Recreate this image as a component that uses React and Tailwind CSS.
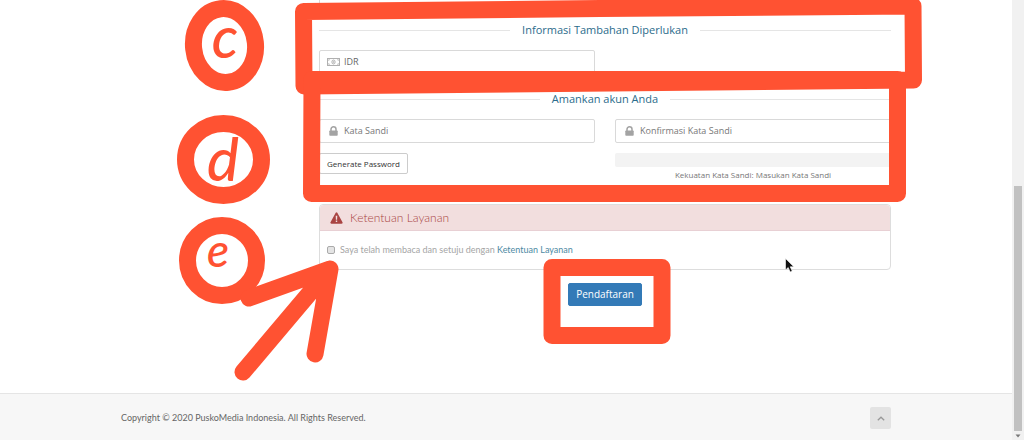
import React, { useState } from "react";

function SectionTitle({ children }) {
  return (
    <div className="flex items-center gap-3">
      <span className="h-px flex-1 bg-[#e5e5e5]" />
      <h2 className="text-[11px] leading-[18px] text-[#2b6c8c]">{children}</h2>
      <span className="h-px flex-1 bg-[#e5e5e5]" />
    </div>
  );
}

function MoneyIcon() {
  return (
    <svg viewBox="0 0 13 8" className="h-2 w-[13px]" fill="none" stroke="#b0b0b0">
      <rect x="0.5" y="0.5" width="12" height="7" />
      <ellipse cx="6.5" cy="4" rx="1.6" ry="2" />
      <path d="M6.5 2.8v2.4M1 2.2h1.2V1M12 2.2h-1.2V1M1 5.8h1.2V7M12 5.8h-1.2V7" strokeWidth="0.7" />
    </svg>
  );
}

function LockIcon() {
  return (
    <svg viewBox="0 0 9 10" className="h-[10px] w-[9px]">
      <path d="M2 5V3.3a2.5 2.5 0 0 1 5 0V5" fill="none" stroke="#a3a3a3" strokeWidth="1.5" />
      <rect x="0.3" y="4.5" width="8.4" height="5.3" rx="0.7" fill="#a3a3a3" />
    </svg>
  );
}

function WarningIcon() {
  return (
    <svg viewBox="0 0 13 12" className="h-3 w-[13px]">
      <path
        d="M5.7.8a.95.95 0 0 1 1.6 0l5.2 9.5c.4.7-.1 1.4-.9 1.4H1.4c-.8 0-1.3-.7-.9-1.4z"
        fill="#a94442"
      />
      <path d="M5.7 3.8h1.6l-.2 4H5.9zM5.8 8.5h1.4v1.4H5.8z" fill="#f2dede" />
    </svg>
  );
}

function PasswordField({ id, label, value, onChange }) {
  return (
    <div className="flex h-6 items-center gap-[6px] rounded-xs border border-[#d9d9d9] bg-white pl-[9px]">
      <label htmlFor={id} aria-label={label}>
        <LockIcon />
      </label>
      <input
        id={id}
        type="password"
        placeholder={label}
        value={value}
        onChange={onChange}
        className="min-w-0 flex-1 text-[9px] text-[#777] outline-none placeholder:text-[#777]"
      />
    </div>
  );
}

// Hand-drawn marks that lie over the form
function Annotations() {
  return (
    <svg
      className="pointer-events-none absolute top-0 left-0"
      width="1024"
      height="440"
      viewBox="0 0 1024 440"
    >
      <g fill="none" stroke="#ff5232" strokeWidth="17" strokeLinecap="round" strokeLinejoin="round">
        <ellipse cx="224.5" cy="45.5" rx="31" ry="37" transform="rotate(-6 224.5 45.5)" />
        <ellipse cx="223.5" cy="159.5" rx="38" ry="36" />
        <ellipse cx="222" cy="260.5" rx="34.5" ry="35" />
        <path d="M303.5 11.5L600 8.5L913 6L913.5 80L304 86Z" />
        <path d="M312 79.5H897.5V193.5H311.5Z" />
        <path d="M552 267.5H662V335.5H552Z" />
        <path d="M249 298L330 269L315 354M243 372L330 269" />
      </g>
      <g fill="#ff5232" textAnchor="middle" className="font-['Lato',sans-serif] font-medium">
        <text x="225" y="58" fontSize="58" fontStyle="italic">c</text>
        <text x="223" y="181" fontSize="60" fontStyle="italic">d</text>
        <text x="218" y="267" fontSize="46" fontStyle="italic">e</text>
      </g>
      <path
        d="M785.5 258.5v11.5l2.7-2.5 2 4.5 2-.9-2-4.3h3.6z"
        fill="#111"
        stroke="#fff"
        strokeWidth="0.6"
      />
    </svg>
  );
}

export default function App() {
  const [currency, setCurrency] = useState("IDR");
  const [password, setPassword] = useState("");
  const [confirm, setConfirm] = useState("");
  const [accepted, setAccepted] = useState(false);

  return (
    <div className="relative flex min-h-screen overflow-hidden bg-white font-['Open_Sans',sans-serif]">
      <div className="flex min-w-0 flex-1 flex-col">
        <main className="mx-auto w-full max-w-[770px] flex-1 pl-[198px]">
          <div className="grid grid-cols-2 gap-5">
            <div className="h-[6px] border-x border-[#d9d9d9]" />
          </div>

          <div className="pt-[15px]">
            <SectionTitle>Informasi Tambahan Diperlukan</SectionTitle>
          </div>
          <div className="mt-[11px] grid grid-cols-2 gap-5">
            <div className="flex h-6 items-center gap-1 rounded-xs border border-[#d9d9d9] pl-[7px]">
              <label htmlFor="currency" aria-label="Mata Uang">
                <MoneyIcon />
              </label>
              <select
                id="currency"
                value={currency}
                onChange={(e) => setCurrency(e.target.value)}
                className="flex-1 appearance-none text-[9px] text-[#666] outline-none"
              >
                <option value="IDR">IDR</option>
              </select>
            </div>
          </div>

          <div className="mt-4">
            <SectionTitle>Amankan akun Anda</SectionTitle>
          </div>
          <div className="mt-[11px] grid grid-cols-2 gap-5">
            <PasswordField
              id="password"
              label="Kata Sandi"
              value={password}
              onChange={(e) => setPassword(e.target.value)}
            />
            <PasswordField
              id="confirm"
              label="Konfirmasi Kata Sandi"
              value={confirm}
              onChange={(e) => setConfirm(e.target.value)}
            />
          </div>
          <div className="mt-[10px] grid grid-cols-2 gap-5">
            <div>
              <button
                type="button"
                className="block h-[21px] rounded-xs border border-[#ccc] px-[7px] text-[8px] text-[#333]"
              >
                Generate Password
              </button>
            </div>
            <div>
              <div className="h-[14px] rounded-xs bg-[#f3f3f3]" />
              <p className="mt-[2px] text-center text-[8px] leading-3 text-[#777]">
                Kekuatan Kata Sandi: Masukan Kata Sandi
              </p>
            </div>
          </div>

          <section className="mt-[23px] rounded-sm border border-[#ddd]">
            <h3 className="flex h-[26px] items-center gap-[7px] rounded-t-sm border-b border-[#e8d0d4] bg-[#f2dede] pl-[10px] font-['Lato',sans-serif] text-[12px] font-light text-[#a94442]">
              <WarningIcon />
              Ketentuan Layanan
            </h3>
            <div className="flex h-[38px] items-center gap-[5px] pl-[7px] font-['Lato',sans-serif] text-[9px] text-[#a5a5a5]">
              <input
                id="terms"
                type="checkbox"
                checked={accepted}
                onChange={(e) => setAccepted(e.target.checked)}
                className="h-2 w-2 appearance-none rounded-xs border border-[#aaa] bg-[#e4e4e4] checked:bg-[#337ab7]"
              />
              <label htmlFor="terms">
                Saya telah membaca dan setuju dengan{" "}
                <a href="#terms" className="text-[#4d8aa3]">
                  Ketentuan Layanan
                </a>
              </label>
            </div>
          </section>

          <div className="mt-[13px] flex justify-center">
            <button
              type="submit"
              className="h-[23px] rounded-xs border border-[#337ab7] bg-[#337ab7] px-[7px] text-[10px] text-white"
            >
              Pendaftaran
            </button>
          </div>
        </main>

        <footer className="border-t border-[#e5e5e5] bg-[#f7f7f7]">
          <div className="mx-auto flex w-full max-w-[770px] items-start justify-between pt-[13px] pb-[11px]">
            <p className="font-['Lato',sans-serif] text-[9px] leading-[22px] text-[#666]">
              Copyright © 2020 PuskoMedia Indonesia. All Rights Reserved.
            </p>
            <button
              type="button"
              aria-label="Kembali ke atas"
              className="flex h-[22px] w-[21px] items-center justify-center rounded-xs bg-[#e3e3e3]"
            >
              <svg viewBox="0 0 8 5" className="h-[5px] w-2" fill="none" stroke="#999" strokeWidth="1.3">
                <path d="M0.8 4.3L4 1.2L7.2 4.3" />
              </svg>
            </button>
          </div>
        </footer>
      </div>

      <div className="flex w-3 flex-col bg-[#f1f1f1] pr-[2px] pl-[2px]">
        <div className="min-h-[186px] flex-1" />
        <div className="h-[245px] bg-[#c1c1c1]" />
        <svg viewBox="0 0 8 9" className="h-[9px] w-2">
          <path d="M1.5 3.5h5L4 6.5z" fill="#777" />
        </svg>
      </div>

      <Annotations />
    </div>
  );
}
